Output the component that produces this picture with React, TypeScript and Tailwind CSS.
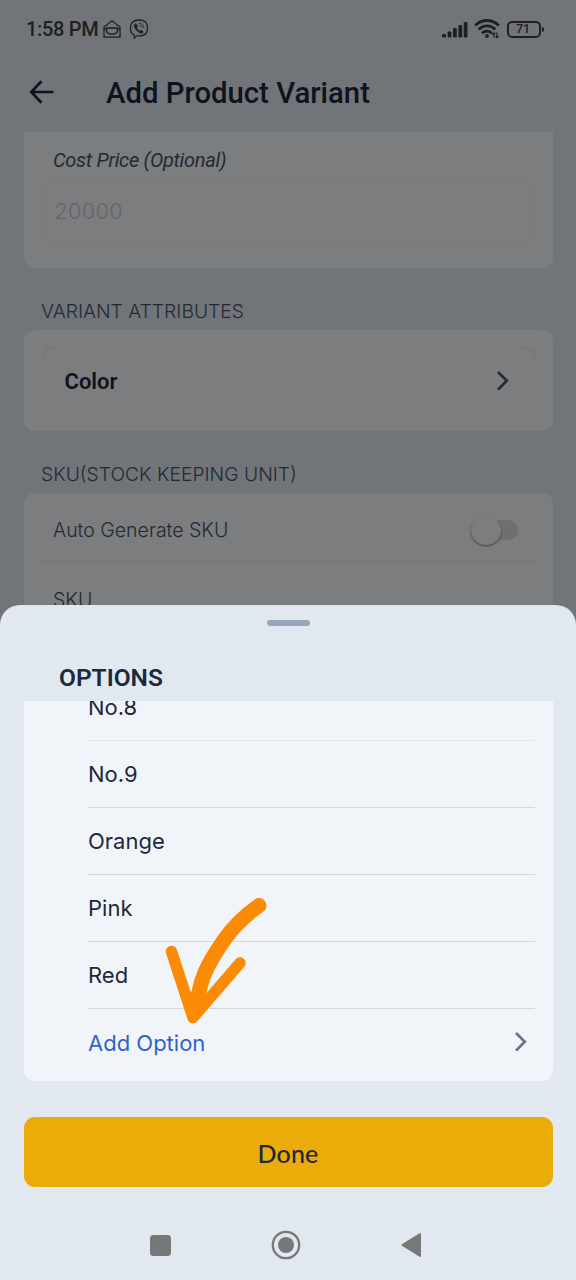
import { ReactNode } from "react";

const OPTIONS = ["No.9", "Orange", "Pink", "Red"];

const Chevron = ({ className }: { className?: string }) => (
  <svg width="14" height="22" viewBox="0 0 14 22" fill="none" className={className}>
    <path d="M2 2 10.800 10.800 2 19.600" stroke="currentColor" strokeWidth="2.700" />
  </svg>
);

const StatusBar = () => (
  <div className="flex h-[58px] items-center justify-between pl-[26px] pr-8 text-[#3e4046]">
    <div className="flex items-center">
      <span className="w-[77px] whitespace-nowrap font-['Roboto'] text-[20px] font-medium tracking-[-0.300px]">1:58 PM</span>
      <svg width="18" height="20" viewBox="0 0 18 20" fill="none" stroke="currentColor" strokeWidth="1.300" strokeLinejoin="round">
        <path d="M1 8 9 1.800 17 8v10.200H1V8Z" />
        <path d="M1 10.700 3.600 9h10.800l2.600 1.700M3.600 9v3.800c2 3 8.800 3 10.800 0V9" />
      </svg>
      <svg width="20" height="20" viewBox="0 0 20 20" fill="none" stroke="currentColor" strokeWidth="1.300" className="ml-2">
        <path d="M10 1C3.800 1 1.500 3.500 1.500 9c0 4 1.300 6.200 3.800 7.200V19l2.600-2.200c7.500.6 10.600-1.800 10.600-7.800C18.500 3.500 16.200 1 10 1Z" />
        <path
          d="M6.500 4.600 5.300 5.800c-.7 1 .3 3.400 2.400 5.700 2.100 2.300 4.500 3.300 5.500 2.500l1.100-1.300-2.300-1.700-1.200 1c-1.300-.6-2.500-2-2.900-3.300l.9-1.200-1.500-2.500Z"
          fill="currentColor"
          stroke="currentColor"
          strokeWidth=".500"
        />
        <path d="M10 4.200c3 .1 4.800 1.900 4.900 4.900M10.200 6.100c1.700.1 2.700 1.100 2.800 2.800" strokeWidth=".8" />
      </svg>
    </div>
    <div className="flex items-center">
      <svg width="26" height="17" viewBox="0 0 26 17" fill="currentColor">
        <rect x="0" y="13" width="4" height="3.500" rx="1" />
        <rect x="5.600" y="10.500" width="3.800" height="6" rx="1" />
        <rect x="11" y="7" width="3.800" height="9.500" rx="1" />
        <rect x="16.400" y="4" width="3.800" height="12.500" rx="1" />
        <rect x="21.700" y="1" width="3.800" height="15.500" rx="1" />
      </svg>
      <svg width="26" height="20" viewBox="0 0 26 20" fill="none" stroke="currentColor" strokeWidth="2.800" className="ml-1.5">
        <path d="M1.200 6.500C8-.2 18-.2 24.800 6.500" />
        <path d="M4.600 10.500c5-4.800 11.800-4.800 16.800 0" />
        <path d="M8 14.300c3-2.800 7-2.800 10 0" />
        <circle cx="13" cy="17" r="1.900" fill="currentColor" stroke="none" />
        <path d="M20.200 13.800v5M18.300 16l1.900-2 1 1.200M22.800 13.600v5.200M24.700 16.800l-1.900 2-1-1.200" strokeWidth="1.200" />
      </svg>
      <div className="ml-[7px] flex h-[17px] w-[34px] items-center justify-center rounded-[5px] border-2 border-current pr-0.5 font-['Roboto'] text-[12.500px] font-medium leading-none">
        71
      </div>
      <div className="ml-px h-[5px] w-[2px] rounded-r bg-current" />
    </div>
  </div>
);

const SectionLabel = ({ children }: { children: ReactNode }) => (
  <div className="flex h-[62px] items-end pb-[4px]">
    <h2 className="whitespace-nowrap pl-[17.500px] text-[19.300px] font-light text-slate-600">{children}</h2>
  </div>
);

const ProductForm = () => (
  <div className="h-[640px] overflow-hidden bg-slate-200">
    <StatusBar />
    <header className="flex h-[74px] items-center pb-1 pl-[28.500px] text-slate-800">
      <svg width="25" height="24" viewBox="0 0 25 24" fill="none" stroke="currentColor" strokeWidth="2.700" className="-mt-0.5">
        <path d="M12.500 1.300 2.200 12l10.300 10.700M2.200 12H24.500" />
      </svg>
      <h1 className="ml-[52.500px] mt-0.5 whitespace-nowrap font-['Roboto'] text-[29.300px] font-medium">Add Product Variant</h1>
    </header>
    <main className="px-[23.500px]">
      <section className="h-[136px] rounded-b-[11px] bg-slate-50 px-[18px] pt-[14px]">
        <label className="block pl-[11.500px] font-['Roboto'] text-[20px] italic leading-7 tracking-[-0.300px] text-slate-600">
          Cost Price (Optional)
        </label>
        <div className="mt-[5px] flex h-[64px] items-center rounded-lg border border-[#f3f5f7] pl-3 text-[21.500px] font-light tracking-[0.400px] text-[#c9cbd6]">
          20000
        </div>
      </section>
      <SectionLabel>VARIANT ATTRIBUTES</SectionLabel>
      <section className="relative h-[101px] rounded-[11px] bg-slate-50 px-[18px] pt-[16px]">
        <span className="absolute left-[18px] top-[17px] h-3 w-3 rounded-tl-xl border-l border-t border-[#e2e5e9]" />
        <span className="absolute right-[18px] top-[17px] h-3 w-3 rounded-tr-xl border-r border-t border-[#e2e5e9]" />
        <div className="flex h-[69px] items-center justify-between pl-[23px] pr-[25px]">
          <span className="pt-0.5 font-['Roboto'] text-[22px] font-semibold text-slate-800">Color</span>
          <Chevron className="text-slate-600" />
        </div>
      </section>
      <SectionLabel>SKU(STOCK KEEPING UNIT)</SectionLabel>
      <section className="h-[160px] rounded-[11px] bg-slate-50 px-[18px]">
        <div className="flex h-[69px] items-center justify-between border-b border-slate-200 pl-[11.500px] pr-[17px] pt-[6px]">
          <span className="pt-px text-[19.500px] font-light text-slate-600">Auto Generate SKU</span>
          <div className="flex h-5 w-[44px] items-center rounded-full bg-[#dedfe2]">
            <div className="-ml-[3px] h-[29px] w-[30px] shrink-0 rounded-full bg-slate-50 shadow-[0_1px_2px_rgba(0,0,0,0.5)]" />
          </div>
        </div>
        <div className="pl-[11.500px] pt-[24px] text-[19.500px] font-light leading-7 text-slate-600">SKU</div>
      </section>
    </main>
  </div>
);

const HandArrow = () => (
  <svg
    width="104"
    height="130"
    viewBox="0 0 104 130"
    fill="none"
    stroke="#fb8b04"
    strokeLinecap="round"
    strokeLinejoin="round"
    className="pointer-events-none absolute left-[163px] top-[895px]"
  >
    <path d="M96 10.500C82 20.500 71 31 62.500 43 51 59.500 43 72 38.500 87 36 96 34 105 32.500 114" strokeWidth="15" />
    <path d="M8.500 56.500 30 122.500 77 68" strokeWidth="11.500" />
  </svg>
);

const OptionsSheet = () => (
  <div className="absolute inset-x-0 bottom-0 flex h-[675px] flex-col rounded-t-[20px] bg-slate-200 px-[23.500px]">
    <div className="mx-auto mt-[15px] h-[6px] w-[43px] shrink-0 rounded-full bg-[#97a5be]" />
    <h2 className="mt-[36px] h-[39px] shrink-0 pl-[35.500px] font-['Roboto'] text-[24.500px] font-semibold leading-[31px] text-slate-800">OPTIONS</h2>
    <ul className="h-[380px] shrink-0 overflow-hidden rounded-b-[11px] bg-slate-100 pl-[64.500px] pr-[18px] text-[22px] font-[370] text-slate-800">
      <li className="-mt-[28px] flex h-[68px] items-center border-b border-slate-200 pt-px">No.8</li>
      {OPTIONS.map((option) => (
        <li key={option} className="flex h-[67px] items-center border-b border-[#d3d8df]">
          {option}
        </li>
      ))}
      <li className="flex h-[67px] items-center justify-between pr-[7px] pt-px text-[#2e64c9]">
        <span>Add Option</span>
        <Chevron className="-mt-0.5 text-slate-500" />
      </li>
    </ul>
    <button className="mt-9 h-[70px] w-full shrink-0 rounded-[11px] bg-[#ebac09] pt-1 font-['Lato'] text-[25px] font-medium tracking-[0.200px] text-slate-800">
      Done
    </button>
    <nav className="flex h-[93px] items-start pl-[126px] pt-[43px] text-[#77787a]">
      <div className="mt-[5px] h-[21px] w-[21px] rounded-[3.500px] bg-current" />
      <svg width="30" height="30" viewBox="0 0 30 30" className="ml-[100.500px]">
        <circle cx="15" cy="15" r="13.200" fill="none" stroke="currentColor" strokeWidth="2.300" />
        <circle cx="15" cy="15" r="8" fill="currentColor" />
      </svg>
      <svg width="20" height="26" viewBox="0 0 20 26" fill="currentColor" stroke="currentColor" strokeWidth="2" strokeLinejoin="round" className="ml-[100px] mt-0.5">
        <path d="M1.500 13 19 2v22Z" />
      </svg>
    </nav>
  </div>
);

const App = () => (
  <div className="relative h-[1280px] w-[576px] overflow-hidden bg-slate-200 font-['Inter',sans-serif]">
    <ProductForm />
    <div className="absolute inset-0 bg-black/50" />
    <OptionsSheet />
    <HandArrow />
  </div>
);

export default App;
